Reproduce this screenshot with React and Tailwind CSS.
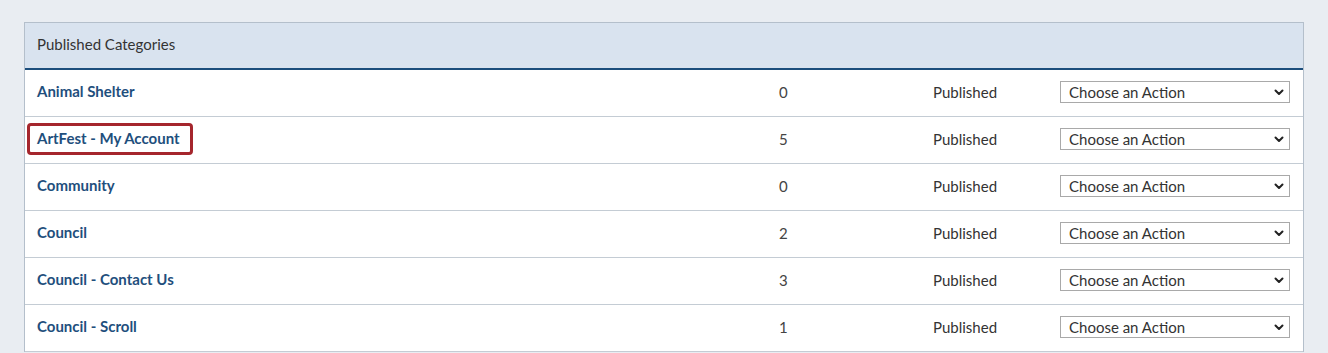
const categories = [
  { name: 'Animal Shelter', count: 0 },
  { name: 'ArtFest - My Account', count: 5, highlight: true },
  { name: 'Community', count: 0 },
  { name: 'Council', count: 2 },
  { name: 'Council - Contact Us', count: 3 },
  { name: 'Council - Scroll', count: 1 },
];

function ActionSelect() {
  return (
    <div className="relative w-[230px] h-[22px] -translate-y-[1px] border border-[#a9a9a9] bg-white flex items-center pl-2 text-[15px] text-[#333]">
      <span>Choose an Action</span>
      <svg className="absolute right-[5px] top-[7px]" width="10" height="7" viewBox="0 0 10 7" fill="none">
        <path d="M1.5 1.5 L5 5 L8.5 1.5" stroke="#222" strokeWidth="2" strokeLinecap="round" strokeLinejoin="round" />
      </svg>
    </div>
  );
}

export default function App() {
  return (
    <div className="min-h-[353px] bg-[#e9edf2] pt-[22px] px-[24px] font-['Lato','Open_Sans',sans-serif]">
      <div className="w-[1280px] border-x border-t border-[#b4bfcb] bg-white">
        <div className="h-[47px] bg-[#d9e3ef] border-b-2 border-[#1c4e7c] flex items-center pl-3 pb-[3px] text-[15px] text-[#333]">
          Published Categories
        </div>
        {categories.map((cat) => (
          <div key={cat.name} className="h-[47px] border-b border-[#c4ccd4] flex items-center text-[15px]">
            <div className="w-[754px] pl-3">
              <span className="relative inline-block leading-5 font-bold text-[#1f4f7d] -translate-y-[2px]">
                {cat.name}
                {cat.highlight && (
                  <span className="absolute -left-[10px] -right-[13px] -top-[5px] -bottom-[7px] border-[3px] border-[#a5262d] rounded-[4px]" />
                )}
              </span>
            </div>
            <div className="w-[154px] text-[#444] -translate-y-[1px]">{cat.count}</div>
            <div className="w-[127px] text-[#333] -translate-y-[1px]">Published</div>
            <ActionSelect />
          </div>
        ))}
      </div>
    </div>
  );
}
